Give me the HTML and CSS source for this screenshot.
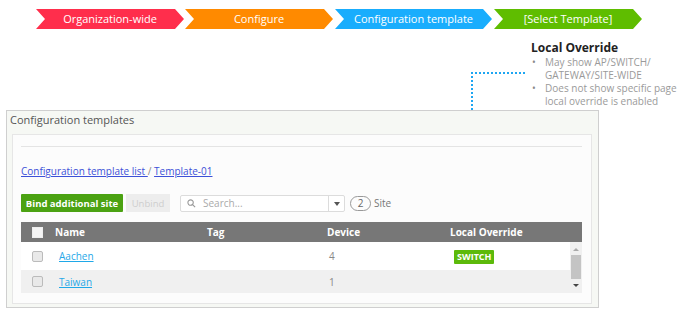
FILE: index.html
```html
<!DOCTYPE html>
<html lang="en">
<head>
    <meta charset="UTF-8">
    <title>Configuration templates</title>
    <link rel="stylesheet" href="styles.css">
</head>
<body>
    <div class="page">
        <!-- navigation path -->
        <div class="steps">
            <div class="step red">Organization-wide</div>
            <div class="step orange">Configure</div>
            <div class="step blue wide">Configuration template</div>
            <div class="step green">[Select Template]</div>
        </div>

        <!-- callout -->
        <div class="callout">
            <h3>Local Override</h3>
            <ul>
                <li>May show AP/SWITCH/<br>GATEWAY/SITE-WIDE</li>
                <li>Does not show specific page<br>local override is enabled</li>
            </ul>
        </div>
        <div class="pointer"></div>
        <div class="pointer-tip"></div>

        <div class="panel">
            <div class="panel-title">Configuration templates</div>
            <div class="panel-body">
                <div class="rule"></div>
                <div class="crumbs">
                    <a href="#">Configuration template list </a><span>/</span> <a href="#">Template-01</a>
                </div>
                <div class="toolbar">
                    <button class="btn-primary">Bind additional site</button>
                    <button class="btn-disabled">Unbind</button>
                    <div class="search">
                        <svg width="9" height="9" viewBox="0 0 10 10"><circle cx="4" cy="4" r="3" fill="none" stroke="#999" stroke-width="1.2"/><line x1="6.2" y1="6.2" x2="9" y2="9" stroke="#999" stroke-width="1.3"/></svg>
                        <span class="placeholder">Search...</span>
                        <span class="caret"></span>
                    </div>
                    <span class="count">2</span>
                    <span class="count-label">Site</span>
                </div>

                <div class="table">
                    <div class="thead">
                        <span class="cb cb-head"></span>
                        <span>Name</span>
                        <span>Tag</span>
                        <span>Device</span>
                        <span>Local Override</span>
                    </div>
                    <div class="tbody">
                        <div class="rows">
                            <div class="row">
                                <span class="cb"></span>
                                <span class="name"><a href="#">Aachen</a></span>
                                <span></span>
                                <span class="num">4</span>
                                <span><span class="badge">SWITCH</span></span>
                            </div>
                            <div class="row alt">
                                <span class="cb"></span>
                                <span class="name"><a href="#">Taiwan</a></span>
                                <span></span>
                                <span class="num">1</span>
                                <span></span>
                            </div>
                        </div>
                        <div class="scrollbar">
                            <span class="arrow up"></span>
                            <span class="thumb"></span>
                            <span class="arrow down"></span>
                        </div>
                    </div>
                </div>
            </div>
        </div>
    </div>
</body>
</html>
```

FILE: styles.css
```css
body {
    margin: 0;
    font-family: "Open Sans", "DejaVu Sans", sans-serif;
    background-color: white;
}

.page {
    position: relative;
    width: 699px;
    height: 317px;
    overflow: hidden;
}

/* steps */
.steps {
    display: flex;
    gap: 1px;
    padding: 9px 0 0 36px;
}

.step {
    width: 148px;
    height: 20px;
    line-height: 20px;
    text-align: center;
    color: white;
    font-size: 11px;
    clip-path: polygon(0 0, calc(100% - 9px) 0, 100% 50%, calc(100% - 9px) 100%, 0 100%, 9px 50%);
}

.step.wide {
    width: 157px;
    margin-left: 1px;
}

.step.green {
    margin-left: 1px;
}

.red { background-color: #ff2e4c; }
.orange { background-color: #ff8a00; }
.blue { background-color: #19adfd; }
.green { background-color: #5fbd00; }

/* callout */
.callout {
    position: absolute;
    left: 531px;
    top: 40px;
}

.callout h3 {
    margin: 0;
    font-size: 12px;
    font-weight: bold;
    color: #222;
    line-height: 16px;
}

.callout ul {
    margin: 0;
    padding: 0;
    list-style: none;
}

.callout li {
    position: relative;
    padding-left: 14px;
    font-size: 10px;
    line-height: 13px;
    color: #9a9a9a;
    white-space: nowrap;
}

.callout li::before {
    content: "•";
    position: absolute;
    left: 1px;
    top: 0;
    color: #888;
}

.pointer {
    position: absolute;
    left: 471px;
    top: 72px;
    width: 52px;
    height: 140px;
    border-top: 2px dotted #1ea6f2;
    border-left: 2px dotted #1ea6f2;
}

.pointer-tip {
    position: absolute;
    left: 469px;
    top: 212px;
    width: 0;
    height: 0;
    border-left: 3.5px solid transparent;
    border-right: 3.5px solid transparent;
    border-top: 7px solid #1ea6f2;
}

/* panel */
.panel {
    position: absolute;
    left: 6px;
    top: 110px;
    width: 591px;
    height: 196px;
    border: 1px solid #cfcfcf;
    background-color: #f6f8f4;
}

.panel-title {
    height: 23px;
    line-height: 17px;
    padding-left: 3px;
    font-size: 11px;
    color: #555;
}

.panel-body {
    margin-left: 5px;
    width: 580px;
    height: 170px;
    border: 1px solid #e6e6e6;
    background-color: #fcfcfc;
    padding: 0 0 0 8px;
    box-sizing: border-box;
}

.rule {
    margin-top: 11px;
    width: 561px;
    border-top: 1px solid #e4e4e4;
}

.crumbs {
    margin-top: 17px;
    font-size: 10px;
    line-height: 14px;
    color: #888;
}

.crumbs a {
    color: #3c50d8;
}

.toolbar {
    display: flex;
    align-items: center;
    margin-top: 16px;
    height: 18px;
}

.btn-primary {
    height: 18px;
    width: 102px;
    border: none;
    padding: 0;
    background-color: #4ba212;
    color: white;
    font-family: inherit;
    font-weight: bold;
    font-size: 9.5px;
    border-radius: 1px;
}

.btn-disabled {
    height: 18px;
    width: 44px;
    margin-left: 3px;
    border: none;
    padding: 0;
    background-color: #ededed;
    color: #cdcdcd;
    font-family: inherit;
    font-size: 9.5px;
}

.search {
    position: relative;
    display: flex;
    align-items: center;
    margin-left: 10px;
    width: 165px;
    height: 17px;
    box-sizing: border-box;
    border: 1px solid #dcdcdc;
    border-radius: 2px;
    background-color: white;
    padding-left: 6px;
}

.placeholder {
    margin-left: 7px;
    font-size: 10px;
    color: #aaa;
}

.caret {
    position: absolute;
    right: 0;
    top: 0;
    width: 15px;
    height: 15px;
    border-left: 1px solid #dcdcdc;
}

.caret::after {
    content: "";
    position: absolute;
    left: 5px;
    top: 6px;
    border-left: 3px solid transparent;
    border-right: 3px solid transparent;
    border-top: 4px solid #555;
}

.count {
    margin-left: 5px;
    width: 19px;
    height: 13px;
    border: 1.5px solid #999;
    border-radius: 8px;
    text-align: center;
    font-size: 10px;
    line-height: 13px;
    color: #666;
}

.count-label {
    margin-left: 3px;
    font-size: 10px;
    color: #777;
}

/* table */
.table {
    margin-top: 10px;
    width: 561px;
}

.thead,
.row {
    display: grid;
    grid-template-columns: 34px 152px 120px 123px 1fr;
    align-items: center;
}

.thead {
    height: 20px;
    background-color: #777;
    color: white;
    font-size: 10px;
    font-weight: bold;
}

.tbody {
    display: flex;
    background-color: #f0f0f0;
}

.rows {
    flex: 1;
}

.row {
    font-size: 10px;
    color: #888;
}

.row:first-child {
    height: 28px;
    background-color: white;
}

.row.alt {
    height: 23px;
}

.name {
    padding-left: 4px;
}

.name a {
    color: #1fa8e8;
}

.num {
    padding-left: 2px;
    color: #888;
}

.cb {
    display: block;
    width: 9px;
    height: 9px;
    margin-left: 11px;
    border: 1px solid #bbb;
    border-radius: 2px;
    background-color: #e9e9e9;
}

.cb-head {
    border-color: #eee;
    background-color: #f4f4f4;
    border-radius: 0;
}

.badge {
    display: inline-block;
    margin-left: 4px;
    padding: 0 3px;
    height: 14px;
    line-height: 14px;
    background-color: #5cba0a;
    color: white;
    font-weight: bold;
    font-size: 9px;
    border-radius: 1px;
}

.scrollbar {
    position: relative;
    width: 12px;
    background-color: #f0f0f0;
}

.arrow {
    position: absolute;
    left: 3px;
    border-left: 3px solid transparent;
    border-right: 3px solid transparent;
}

.arrow.up {
    top: 6px;
    border-bottom: 3px solid #aaa;
}

.arrow.down {
    bottom: 6px;
    border-top: 3px solid #444;
}

.thumb {
    position: absolute;
    left: 1px;
    top: 13px;
    width: 10px;
    height: 24px;
    background-color: #c4c4c4;
}
```
